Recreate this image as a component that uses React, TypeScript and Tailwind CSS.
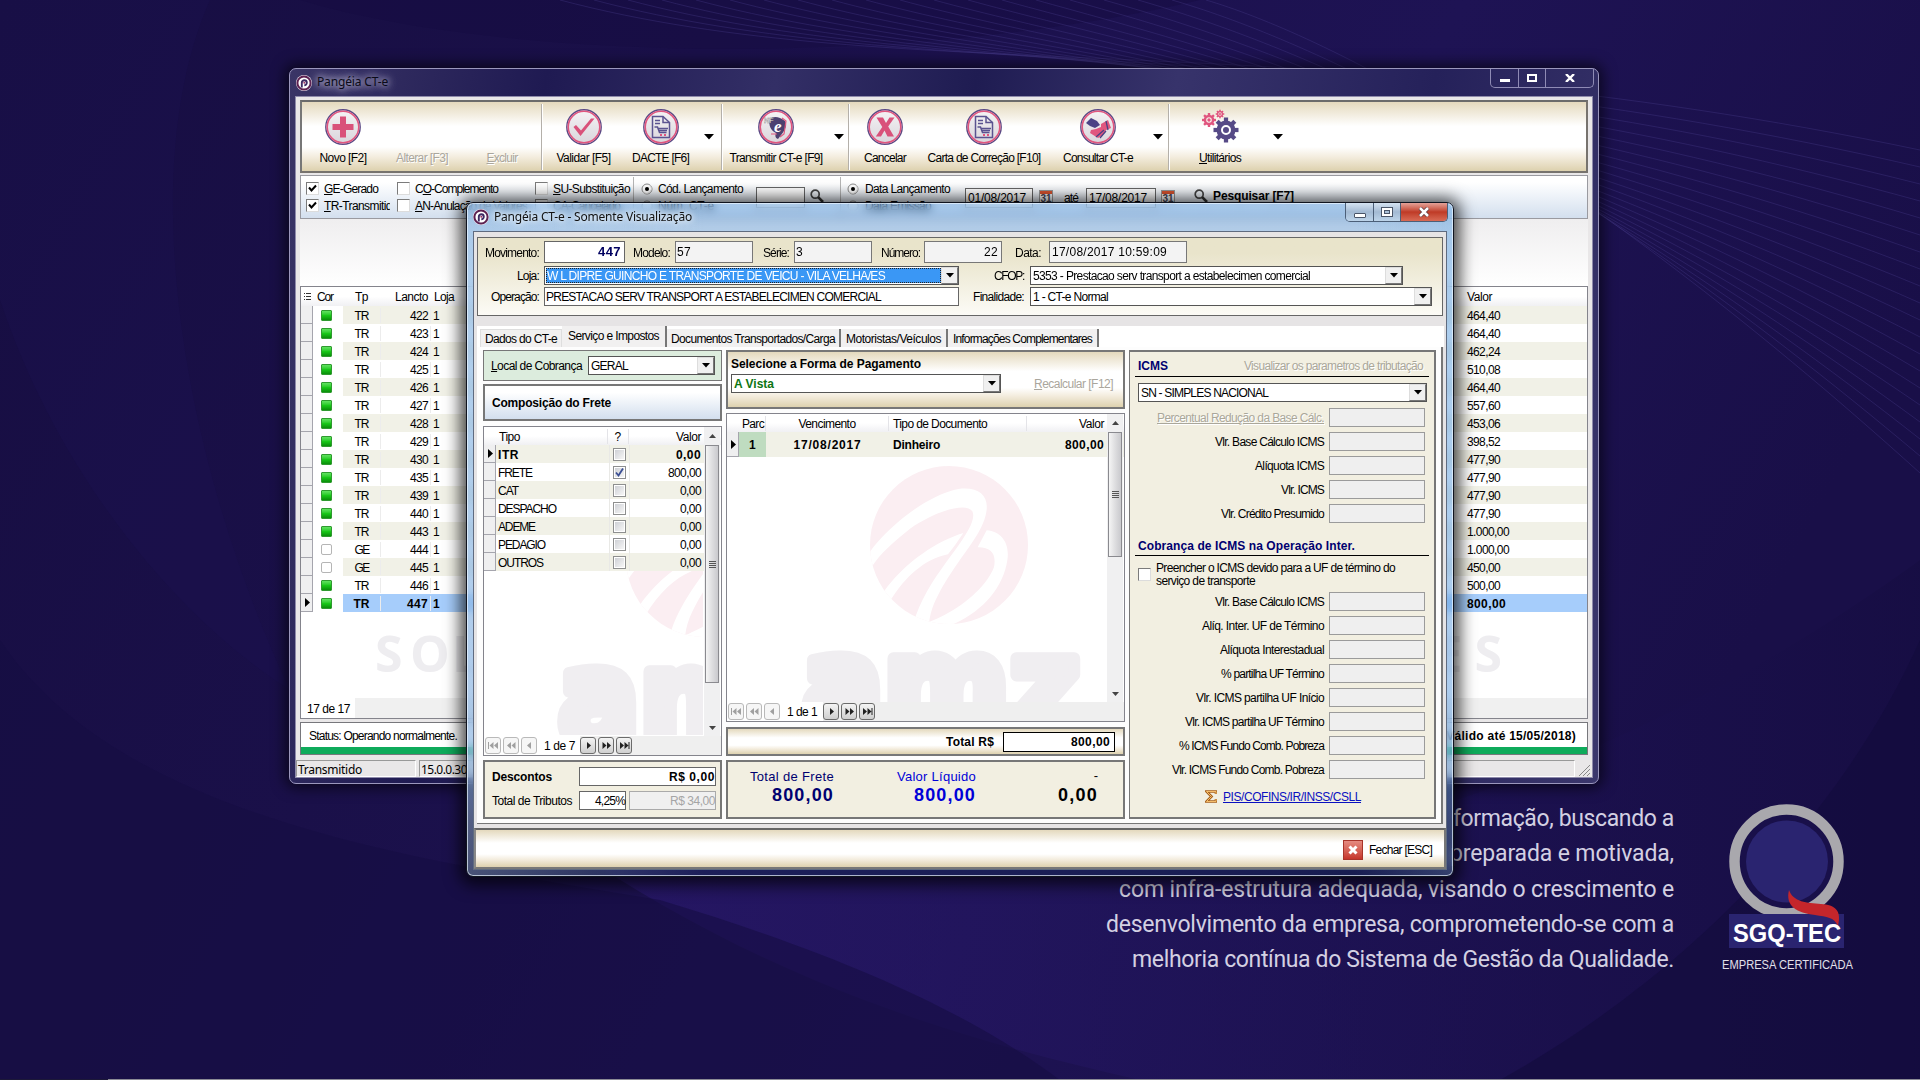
import { useLayoutEffect, useRef, useState, type ReactNode } from "react";

function F({ w, c = "", children }: { w: number; c?: string; children: ReactNode }) {
  const ref = useRef<HTMLSpanElement>(null);
  const [sp, setSp] = useState(0);
  useLayoutEffect(() => {
    const el = ref.current;
    if (!el) return;
    const natural = el.getBoundingClientRect().width;
    setSp((w - natural) / Math.max(1, (el.textContent || "").length));
  }, []);
  return (
    <span ref={ref} className={`inline-block shrink-0 translate-y-px whitespace-pre ${c}`} style={{ letterSpacing: `${sp}px` }}>
      {children}
    </span>
  );
}

const BEIGE = "bg-[linear-gradient(180deg,#e4d9bd_0%,#ffffff_35%,#ffffff_65%,#f3ecdd_80%,#ddd1ae_100%)]";

function Desktop() {
  return (
    <svg className="absolute inset-0" width="1920" height="1080" viewBox="0 0 1920 1080">
      <defs>
        <linearGradient id="bg" x1="0" y1="0" x2="1" y2="0.3">
          <stop offset="0" stopColor="#170e42" />
          <stop offset="0.35" stopColor="#1a1049" />
          <stop offset="0.7" stopColor="#1e1354" />
          <stop offset="1" stopColor="#190f48" />
        </linearGradient>
        <linearGradient id="swell" x1="0" y1="0" x2="1" y2="0">
          <stop offset="0" stopColor="#2a196e" stopOpacity="0.7" />
          <stop offset="0.5" stopColor="#20145a" stopOpacity="0.6" />
          <stop offset="1" stopColor="#160d42" stopOpacity="0.7" />
        </linearGradient>
      </defs>
      <rect width="1920" height="1080" fill="url(#bg)" />
      <path d="M0 0H210C130 180 190 480 290 690C180 620 60 480 0 300Z" fill="#20135a" opacity="0.2" />
      <path d="M560 840C760 980 960 1040 1140 1080H1920V560C1700 720 1400 860 1100 860Z" fill="url(#swell)" />
      <path d="M0 640C120 820 420 860 660 900C860 960 980 1020 1060 1080H0Z" fill="#160d42" opacity="0.6" />
      <path d="M1500 1080C1680 980 1840 820 1920 640V1080Z" fill="#130b3c" opacity="0.6" />
      <path d="M300 0C500 60 900 70 1200 0Z" fill="#150c42" opacity="0.5" />
      <g fill="none" stroke="#4a3d8c" strokeOpacity="0.34" strokeWidth="1">
        {Array.from({ length: 20 }, (_, i) => (
          <path key={i} d={`M${560 + i * 34} 0C${900 + i * 22} ${90 - i * 3} ${1300 + i * 14} ${20 + i * 7} 1920 ${150 + i * 17}`} />
        ))}
      </g>
      <rect y="1079" width="1920" height="1" fill="#8b8b95" />
      <rect y="1079" width="108" height="1" fill="#1c1838" />
    </svg>
  );
}

function AppLogo({ size }: { size: number }) {
  return (
    <svg width={size} height={size} viewBox="0 0 16 16" className="shrink-0">
      <circle cx="8" cy="8" r="8" fill="#efe6ef" />
      <circle cx="8" cy="8" r="6.6" fill="#fff" stroke="#5c2050" strokeWidth="2" />
      <path d="M5.8 12.5V7.8A2.5 2.5 0 1 1 8.300 10.300" fill="none" stroke="#3d2a63" strokeWidth="1.900" />
      <circle cx="8.3" cy="7.8" r="1" fill="#a03565" />
    </svg>
  );
}

function Sphere() {
  return (
    <svg width="158" height="158" viewBox="450 197 474 474">
      <defs>
        <clipPath id="ball"><circle cx="687" cy="434" r="237" /></clipPath>
      </defs>
      <g clipPath="url(#ball)">
        <rect x="450" y="197" width="474" height="474" fill="#fbeef2" />
        <g fill="#fff">
          <path d="M440 468C500 380 620 285 715 266C775 258 808 285 799 335C788 400 730 455 670 555C645 600 630 630 626 680L580 672C600 590 660 510 705 450C745 395 768 355 757 333C740 305 650 330 570 385C520 425 480 460 455 500Z" />
          <path d="M488 580C540 500 640 425 730 398C712 425 698 445 684 462C620 475 560 520 508 606Z" />
          <path d="M800 390C845 393 870 430 862 480C850 560 790 635 690 676L625 666C720 630 800 560 822 500C830 460 812 440 773 441Z" />
        </g>
      </g>
    </svg>
  );
}

function Watermark() {
  return (
    <>
      <div className="absolute left-[73px] top-0"><Sphere /></div>
      <svg className="absolute left-0 top-[150px]" width="292" height="160">
        <text x="5" y="114" textLength="278" lengthAdjust="spacingAndGlyphs" fontFamily="DejaVu Sans" fontWeight="bold" fontSize="130" fill="#f0eef1" stroke="#f0eef1" strokeWidth="13" strokeLinejoin="round">amz</text>
      </svg>
    </>
  );
}

/* ---- toolbar ---- */
function Ring({ children }: { children: ReactNode }) {
  return (
    <svg width="36" height="36" viewBox="0 0 36 36">
      <defs>
        <linearGradient id="rg" x1="0" y1="0" x2="0" y2="1"><stop offset="0" stopColor="#f4f2f4" /><stop offset="1" stopColor="#dad6dc" /></linearGradient>
      </defs>
      <circle cx="18" cy="18" r="17.2" fill="#fff" stroke="#5b4a85" strokeWidth="1.4" />
      <circle cx="18" cy="18" r="15.8" fill="url(#rg)" stroke="#e0567f" strokeWidth="1.6" />
      {children}
    </svg>
  );
}
const DocIcon = () => (
  <Ring>
    <g fill="none" stroke="#5b5390" strokeWidth="1.5">
      <path d="M9.5 7.5H20L26.5 13.5V28.5H9.5Z" /><path d="M20 7.5V13.5H26.5M12 11.5H17M12 14.5H17" />
      <path d="M11.5 18H14.5L16.5 23.5H23.5M15.5 19.5H25M16 21.5H24" />
    </g>
    <rect x="17" y="25" width="2" height="2" fill="#e0567f" /><rect x="21" y="25" width="2" height="2" fill="#e0567f" />
  </Ring>
);
function Gear({ x, y, r, color }: { x: number; y: number; r: number; color: string }) {
  return (
    <g transform={`translate(${x} ${y})`} fill={color}>
      {[0, 45, 90, 135, 180, 225, 270, 315].map((a) => (
        <rect key={a} x={-r * 0.17} y={-r} width={r * 0.34} height={r * 0.4} transform={`rotate(${a})`} />
      ))}
      <circle r={r * 0.58} fill="none" stroke={color} strokeWidth={r * 0.36} />
      <circle r={r * 0.24} />
    </g>
  );
}
function Tool({ icon, w, cell, dis, children }: { icon?: ReactNode; w: number; cell: string; dis?: boolean; children: ReactNode }) {
  return (
    <div className={`flex h-[70px] shrink-0 flex-col items-center pt-[7px] ${cell}`}>
      <div className="flex h-9 items-center">{icon}</div>
      <div className="mt-[5px]">
        <F w={w} c={dis ? "text-[#aaa69c] [text-shadow:1px_1px_0_#fff]" : ""}>{children}</F>
      </div>
    </div>
  );
}
const Drop = ({ c }: { c: string }) => (
  <div className={`flex h-[70px] shrink-0 justify-center pt-[32px] ${c}`}>
    <svg width="10" height="6"><path d="M0 0H10L5 5.5Z" fill="#000" /></svg>
  </div>
);
const Sep = () => <div className="mt-[2px] h-[66px] w-[2px] shrink-0 border-l border-[#b4b0aa] bg-white" />;

function Check({ on }: { on?: boolean }) {
  return (
    <span className="flex h-[13px] w-[13px] shrink-0 items-center justify-center border border-[#7b7b7b] border-b-[#dcdcdc] border-r-[#dcdcdc] bg-white">
      {on && <svg width="9" height="9" viewBox="0 0 9 9"><path d="M1 3.5L3.5 6.5L8 1.5" fill="none" stroke="#000" strokeWidth="2" /></svg>}
    </span>
  );
}
function Radio({ on }: { on?: boolean }) {
  return (
    <svg width="12" height="12" className="shrink-0">
      <circle cx="6" cy="6" r="5" fill="#fff" stroke="#8a8a8a" /><path d="M2.5 9.5A5 5 0 0 0 9.5 2.5" stroke="#ddd" fill="none" />
      {on && <circle cx="6" cy="6" r="2" fill="#000" />}
    </svg>
  );
}
const Mag = () => (
  <svg width="14" height="14" viewBox="0 0 14 14" className="shrink-0"><circle cx="5.2" cy="5.2" r="4" fill="#eef3f8" stroke="#444" strokeWidth="1.7" /><path d="M8.2 8.2L13 13" stroke="#333" strokeWidth="2.6" /></svg>
);
const Cal = () => (
  <div className="h-[14px] w-[14px] shrink-0 border border-[#9a9a9a] bg-white text-center text-[10px] font-bold leading-[10px] text-[#445]"><div className="h-[3px] bg-[#d9532f]" />31</div>
);

const rowsMain: [string, string, string, boolean][] = [
  ["TR", "422", "464,40", true], ["TR", "423", "464,40", true], ["TR", "424", "462,24", true], ["TR", "425", "510,08", true],
  ["TR", "426", "464,40", true], ["TR", "427", "557,60", true], ["TR", "428", "453,06", true], ["TR", "429", "398,52", true],
  ["TR", "430", "477,90", true], ["TR", "435", "477,90", true], ["TR", "439", "477,90", true], ["TR", "440", "477,90", true],
  ["TR", "443", "1.000,00", true], ["GE", "444", "1.000,00", false], ["GE", "445", "450,00", false], ["TR", "446", "500,00", true],
  ["TR", "447", "800,00", true],
];

const Ptr = () => <svg width="5" height="9"><path d="M0 0L5 4.5L0 9Z" fill="#000" /></svg>;

function MainWindow() {
  return (
    <div className="absolute left-[289px] top-[68px] flex h-[716px] w-[1310px] flex-col rounded-[7px] border border-[#9b97bd] bg-[linear-gradient(100deg,#3a3566_0%,#1f1a52_18%,#332f66_34%,#1f1c52_48%,#37336b_62%,#25215a_80%,#3b376c_100%)] px-[5px] pb-[5px] shadow-[0_0_14px_4px_rgba(0,0,0,0.6)]">
      <div className="flex h-[27px] shrink-0 items-center">
        <div className="ml-[1px]"><AppLogo size={16} /></div>
        <div className="mb-[4px] ml-[5px] font-['Noto_Sans'] text-[12px] text-[#0a0a18] [text-shadow:0_0_6px_#b9b6cf,0_0_8px_#b9b6cf,0_0_12px_#a7a3c4]"><F w={71}>Pangéia CT-e</F></div>
        <div className="mb-[8px] ml-auto mr-[-1px] flex h-[19px] rounded-b-[5px] border border-t-0 border-[#8f8bb5] text-white">
          <div className="flex w-[28px] justify-center border-r border-[#8f8bb5] pt-[10px]"><div className="h-[3px] w-[10px] bg-white" /></div>
          <div className="flex w-[27px] justify-center border-r border-[#8f8bb5] pt-[5px]"><div className="h-[8px] w-[10px] border-[2.5px] border-white" /></div>
          <div className="flex w-[47px] justify-center pt-[5px]"><svg width="10" height="8" viewBox="0 0 10 8"><path d="M1 0L9 8M9 0L1 8" stroke="#fff" strokeWidth="2.4" /></svg></div>
        </div>
      </div>
      <div className="flex flex-1 flex-col border border-[#8f8bab] bg-[#e9e7e8] px-[4px] pt-[3px]">
        <div className={`flex h-[73px] shrink-0 border-2 border-[#77736e] border-t-[#6b6b6b] border-l-[#777] ${BEIGE}`}>
          <Tool cell="ml-[3px] w-[76px]" w={47} icon={<Ring><path d="M15 7.5h6v7.500h7.500v6h-7.500v7.500h-6v-7.500h-7.500v-6h7.500z" fill="#d9517a" /></Ring>}>Novo [F2]</Tool>
          <Tool cell="w-[82px]" w={52} dis>Alterar [F3]</Tool>
          <Tool cell="w-[78px]" w={31} dis><u>E</u>xcluir</Tool>
          <Sep />
          <Tool cell="w-[81px]" w={54} icon={<Ring><path d="M7.500 18L14.500 27L28.500 9.500L25 9.500L15 21.500L10 16Z" fill="#d9517a" /></Ring>}>Validar [F5]</Tool>
          <Tool cell="w-[73px]" w={57} icon={<DocIcon />}>DACTE [F6]</Tool>
          <Drop c="w-[24px]" />
          <Sep />
          <Tool cell="w-[106px]" w={93} icon={<Ring><path d="M12 10C15 7 21 7 27 12C31 17 24 25 20 30C17 29 17 26 18 24C13 22 10 16 12 10Z" fill="#4c4170" /><path d="M24 9L28 12L26 25L22 28M13 25H19" fill="none" stroke="#e0567f" strokeWidth="1.200" /><text x="16" y="23" fontFamily="Liberation Serif" fontStyle="italic" fontWeight="bold" fontSize="17" fill="#fff">e</text><text x="6" y="14" fontFamily="Liberation Sans" fontWeight="bold" fontSize="7" fill="#fff" stroke="#666" strokeWidth=".3">NF</text></Ring>}>Transmitir CT-e [F9]</Tool>
          <Drop c="w-[19px]" />
          <Sep />
          <Tool cell="w-[70px]" w={42} icon={<Ring><path d="M9.500 8.500H16L19 14L22.500 8.500H27.500L21.200 17.500L27 27.500H20.500L17.500 21.500L14 27.500H8.800L15.300 18Z" fill="#d9517a" /></Ring>}>Cancelar</Tool>
          <Tool cell="w-[128px]" w={113} icon={<DocIcon />}>Carta de Correção [F10]</Tool>
          <Tool cell="w-[100px]" w={70} icon={<Ring><path d="M6 14L11 9L17 12L20 16L15 19L10 17Z" fill="#4b4285" /><path d="M21 15L28 11L31 19L26 21L23 26L18 29L10 24L11 21L16 20L21 18Z" fill="#e0567f" /><path d="M16 28l8-7M20 29l6-7M26 12l2 9" stroke="#4b4285" strokeWidth="1.300" /></Ring>}>Consultar CT-e</Tool>
          <Drop c="w-[20px]" />
          <Sep />
          <Tool cell="w-[100px]" w={42} icon={<svg width="40" height="38"><Gear x={26} y={22} r={12.5} color="#564a86" /><Gear x={9} y={12} r={7} color="#e0567f" /><Gear x={20} y={6} r={4.3} color="#e0567f" /></svg>}><u>U</u>tilitários</Tool>
          <Drop c="w-[16px]" />
        </div>
        <div className="mt-[2px] flex h-[44px] shrink-0 border border-[#9a9aa0] bg-gradient-to-b from-white from-15% to-[#d3dfee]">
          <div className="w-[92px] pl-[5px] pt-[4px]">
            <div className="flex h-[17px] items-center gap-[5px]"><Check on /><F w={54}><u>G</u>E-Gerado</F></div>
            <div className="flex h-[17px] w-[84px] items-center gap-[5px] overflow-hidden"><Check on /><F w={74}><u>T</u>R-Transmitido</F></div>
          </div>
          <div className="w-[137px] pl-[4px] pt-[4px]">
            <div className="flex h-[17px] items-center gap-[5px]"><Check /><F w={83}>C<u>O</u>-Complemento</F></div>
            <div className="flex h-[17px] items-center gap-[5px]"><Check /><F w={112}><u>A</u>N-Anulação de Valores</F></div>
          </div>
          <div className="w-[103px] pl-[5px] pt-[4px]">
            <div className="flex h-[17px] items-center gap-[5px]"><Check /><F w={77}><u>S</u>U-Substituição</F></div>
            <div className="flex h-[17px] items-center gap-[5px]"><Check /><F w={67}>CA-Cancelado</F></div>
          </div>
          <div className="mt-[1px] w-px bg-[#b5b5b5]" />
          <div className="w-[122px] pl-[7px] pt-[4px]">
            <div className="flex h-[17px] items-center gap-[5px]"><Radio on /><F w={85}>Cód. Lançamento</F></div>
            <div className="flex h-[17px] items-center gap-[5px]"><Radio /><F w={56}>Núm. CT-e</F></div>
          </div>
          <div className="mt-[11px] h-[21px] w-[49px] border border-[#666] bg-white" />
          <div className="ml-[5px] mt-[13px]"><Mag /></div>
          <div className="ml-[16px] mt-[1px] w-px bg-[#b5b5b5]" />
          <div className="w-[124px] pl-[6px] pt-[4px]">
            <div className="flex h-[17px] items-center gap-[6px]"><Radio on /><F w={85}>Data Lançamento</F></div>
            <div className="flex h-[17px] items-center gap-[6px]"><Radio /><F w={66}>Data Emissão</F></div>
          </div>
          <div className="mt-[12px] h-[20px] w-[68px] border border-[#666] bg-white pl-[2px] leading-[16px]"><F w={58}>01/08/2017</F></div>
          <div className="ml-[6px] mt-[14px]"><Cal /></div>
          <div className="ml-[11px] mt-[14px]"><F w={14}>até</F></div>
          <div className="ml-[8px] mt-[12px] h-[20px] w-[70px] border border-[#666] bg-white pl-[2px] leading-[16px]"><F w={58}>17/08/2017</F></div>
          <div className="ml-[5px] mt-[14px]"><Cal /></div>
          <div className="ml-[19px] mt-[13px]"><Mag /></div>
          <div className="ml-[5px] mt-[12px] font-bold"><F w={81}>Pesquisar [F7]</F></div>
        </div>
        <div className="h-[67px] shrink-0 bg-gradient-to-b from-[#efeeef] to-white" />
        <div className="relative flex h-[433px] shrink-0 flex-col border border-[#84848c] bg-white">
          <div className="absolute left-[74px] top-[331px] font-['Open_Sans'] text-[50px] font-bold leading-[70px] text-[#eeedf0]">
            <span className="inline-block w-[35px]">S</span><span className="inline-block w-[42px]">O</span><span>L</span>
          </div>
          <div className="absolute right-[85px] top-[331px] font-['Open_Sans'] text-[50px] font-bold leading-[70px] text-[#eeedf0]">
            <span className="inline-block w-[40px]">E</span><span>S</span>
          </div>
          <div className="flex h-[19px] shrink-0 items-center bg-gradient-to-b from-white from-50% to-[#f0f0f3]">
            <div className="w-[12px] pl-[3px]"><svg width="7" height="9"><path d="M0 1.5H1M2 1.5H7M0 4.500H1M2 4.500H7M0 7.500H1M2 7.500H7" stroke="#333" /></svg></div>
            <div className="w-[29px] pl-[4px]"><F w={16}>Cor</F></div>
            <div className="w-[39px] text-center"><F w={13}>Tp</F></div>
            <div className="w-[47px] text-right"><F w={33}>Lancto</F></div>
            <div className="pl-[6px]"><F w={20}>Loja</F></div>
            <div className="ml-auto w-[120px]"><F w={25}>Valor</F></div>
          </div>
          {rowsMain.map(([tp, n, v, ok], i) => {
            const last = i === 16;
            return (
              <div key={n} className={`relative flex h-[18px] shrink-0 items-center ${last ? "font-bold" : ""}`}>
                <div className="flex h-[18px] w-[12px] items-center border-b border-r border-[#a5a5ad] bg-[#efeff0] pl-[4px]">{last && <Ptr />}</div>
                <div className="flex h-[18px] w-[30px] items-center bg-white pl-[8px]">
                  {ok ? <div className="h-[11px] w-[11px] rounded-[1px] border border-[#2f9a2f] bg-gradient-to-b from-[#5fe35f] via-[#18c818] to-[#0a8f0a]" /> : <div className="h-[11px] w-[11px] rounded-[2px] border border-[#b5b5b5] bg-white" />}
                </div>
                <div className={`flex h-[18px] flex-1 items-center ${last ? "bg-[#a6cdfb]" : i % 2 ? "bg-white" : "bg-[#f1f1e7]"}`}>
                  <div className="w-[38px] border-r border-[#ececec] text-center"><F w={last ? 16 : 14}>{tp}</F></div>
                  <div className="w-[50px] border-r border-[#ececec] pr-[2px] text-right"><F w={last ? 21 : 18}>{n}</F></div>
                  <div className="pl-[2px]"><F w={6}>1</F></div>
                  <div className="ml-auto w-[120px]"><F w={v.length === 8 ? 42 : last ? 39 : 33}>{v}</F></div>
                </div>
              </div>
            );
          })}
          <div className="mt-auto flex h-[20px] items-center bg-[#f0f0f0]"><div className="flex h-full w-[54px] items-center bg-white pl-[6px]"><F w={43}>17 de 17</F></div></div>
        </div>
        <div className="mt-[3px] flex h-[33px] shrink-0 flex-col border border-[#77777c] bg-white">
          <div className="flex flex-1 items-center justify-between pl-[8px] pr-[11px]"><F w={148}>Status: Operando normalmente.</F><span className="font-bold"><F w={245}>Certificado Digital (Válido até 15/05/2018)</F></span></div>
          <div className="h-[7px] bg-[#0fab5b]" />
        </div>
        <div className="mx-[-4px] mt-[5px] flex flex-1 items-center gap-[3px] font-['Noto_Sans']">
          <div className="flex h-full w-[120px] items-center border border-[#999] border-b-white border-r-white pl-[1px]"><F w={64}>Transmitido</F></div>
          <div className="flex h-full flex-1 items-center border border-[#999] border-b-white border-r-white pl-[1px]"><F w={46}>15.0.0.30</F></div>
          <svg width="13" height="13" className="mr-px mt-[3px]"><path d="M1 12L12 1M5 12L12 5M9 12L12 9" stroke="#888" /></svg>
        </div>
      </div>
    </div>
  );
}

/* ---- dialog pieces ---- */
function ArrowBtn() {
  return (
    <div className="flex h-[17px] w-[17px] shrink-0 items-center justify-center border border-b-[#777] border-l-[#ddd] border-r-[#777] border-t-[#ddd] bg-[#f0f0f0]"><svg width="8" height="5"><path d="M0 0H8L4 4.500Z" fill="#000" /></svg></div>
  );
}
function Sel({ c, t, w, tc = "" }: { c: string; t: string; w: number; tc?: string }) {
  return (
    <div className={`flex h-[19px] shrink-0 items-center border border-[#555] bg-white ${c}`}>
      <div className={`min-w-0 flex-1 pl-[2px] ${tc}`}><F w={w}>{t}</F></div>
      <ArrowBtn />
    </div>
  );
}
function Nav({ label, w }: { label: string; w: number }) {
  const btn = (d: string, off: boolean) => (
    <div className={`flex h-[17px] w-[16px] items-center justify-center rounded-[3px] border ${off ? "border-[#b9b9b9] bg-[#f6f6f6]" : "border-[#6b6b6b] bg-gradient-to-b from-[#f4f4f4] to-[#cfcfcf]"}`}>
      <svg width="11" height="7" viewBox="0 0 11 7"><path d={d} fill={off ? "#a0a0a0" : "#222"} /></svg>
    </div>
  );
  return (
    <div className="relative mt-auto flex h-[19px] shrink-0 items-center bg-[#efefef]">
      <div className="flex h-full items-center gap-[2px] bg-white pl-px">
        {btn("M0 0h1v7h-1zM5.500 0v7L1.500 3.500zM10 0v7L6 3.500z", true)}
        {btn("M5 0v7L1 3.500zM9.500 0v7L5.500 3.500z", true)}
        {btn("M7 0v7L3 3.500z", true)}
        <div className="w-[41px] pl-[5px]"><F w={w}>{label}</F></div>
      </div>
      <div className="flex items-center gap-[2px]">
        {btn("M4 0v7L8 3.500z", false)}
        {btn("M1.500 0v7L5.500 3.500zM6 0v7L10 3.500z", false)}
        {btn("M1 0v7L5 3.500zM5.500 0v7L9.500 3.500zM9.500 0h1v7h-1z", false)}
      </div>
    </div>
  );
}
function Scroll({ thumb }: { thumb: string }) {
  return (
    <div className="absolute bottom-[19px] right-px top-0 flex w-[16px] flex-col items-center bg-[#f0f0f1]">
      <div className="flex h-[18px] items-center"><svg width="7" height="4"><path d="M0 4L3.500 0L7 4Z" fill="#444" /></svg></div>
      <div className={`flex w-[14px] flex-col items-center justify-center gap-[1px] border border-[#8a8a8f] bg-gradient-to-r from-[#f5f5f5] via-[#dedee0] to-[#c9c9cd] ${thumb}`}>
        <div className="h-px w-[7px] bg-[#555]" /><div className="h-px w-[7px] bg-[#555]" /><div className="h-px w-[7px] bg-[#555]" /><div className="h-px w-[7px] bg-[#555]" />
      </div>
      <div className="mt-auto flex h-[16px] items-center"><svg width="7" height="4"><path d="M0 0L3.500 4L7 0Z" fill="#444" /></svg></div>
    </div>
  );
}

const frete: [string, number, string][] = [["ITR", 21, "0,00"], ["FRETE", 34, "800,00"], ["CAT", 20, "0,00"], ["DESPACHO", 58, "0,00"], ["ADEME", 37, "0,00"], ["PEDAGIO", 47, "0,00"], ["OUTROS", 45, "0,00"]];
const icms1: [string, number][] = [["Percentual Redução da Base Cálc.", 167], ["Vlr. Base Cálculo ICMS", 109], ["Alíquota ICMS", 69], ["Vlr. ICMS", 43], ["Vlr. Crédito Presumido", 103]];
const icms2: [string, number][] = [["Vlr. Base Cálculo ICMS", 109], ["Alíq. Inter. UF de Término", 122], ["Alíquota Interestadual", 104], ["% partilha UF Término", 103], ["Vlr. ICMS partilha UF Início", 128], ["Vlr. ICMS partilha UF Término", 139], ["% ICMS Fundo Comb. Pobreza", 145], ["Vlr. ICMS Fundo Comb. Pobreza", 152]];
const tabs: [string, number, string][] = [["Dados do CT-e", 72, "w-[82px]"], ["Serviço e Impostos", 91, "w-[105px]"], ["Documentos Transportados/Carga", 164, "w-[174px]"], ["Motoristas/Veículos", 95, "w-[107px]"], ["Informações Complementares", 139, "w-[151px]"]];

function IcmsRows({ rows, first }: { rows: [string, number][]; first?: boolean }) {
  return (
    <div className="flex flex-col gap-[5px] pr-[9px]">
      {rows.map(([t, w], i) => (
        <div key={t} className="flex h-[19px] items-center justify-end gap-[5px]">
          <F w={w} c={first && i === 0 ? "text-[#aaa79a] underline [text-shadow:1px_1px_0_#fff]" : ""}>{t}</F>
          <div className="h-[19px] w-[96px] border border-[#9b9b9b] bg-[#efefef]" />
        </div>
      ))}
    </div>
  );
}

function Lbl({ w, cell, t }: { w: number; cell: string; t: string }) {
  return <div className={`shrink-0 text-right ${cell}`}><F w={w}>{t}</F></div>;
}

function Dialog() {
  return (
    <div className="absolute left-[466px] top-[202px] flex h-[675px] w-[988px] flex-col rounded-[7px] border border-[#10141f] bg-[linear-gradient(180deg,rgba(30,120,210,0.3)_0%,rgba(30,110,200,0.3)_82%,rgba(20,50,90,0.4)_92%,rgba(20,40,80,0.5)_100%),linear-gradient(90deg,rgba(225,235,245,0.5)_0%,rgba(225,235,245,0)_24%,rgba(190,220,245,0)_90%,rgba(190,220,245,0.35)_100%)] px-[6px] pb-[6px] shadow-[inset_0_0_0_1px_rgba(235,245,255,0.7),0_2px_16px_6px_rgba(0,0,0,0.7)] backdrop-blur-[5px]">
      <div className="flex h-[28px] shrink-0 items-center">
        <div><AppLogo size={16} /></div>
        <div className="mb-[4px] ml-[5px] font-['Noto_Sans'] text-[12px] text-[#111] [text-shadow:0_0_5px_#fff,0_0_9px_#fff]"><F w={198}>Pangéia CT-e - Somente Visualização</F></div>
        <div className="mb-[9px] ml-auto mr-[-1px] flex h-[19px] overflow-hidden rounded-b-[5px] border border-t-0 border-[#4c5f78]">
          <div className="flex w-[28px] justify-center border-r border-[#4c5f78] bg-gradient-to-b from-[#d5e3f2] via-[#a3bad3] to-[#bdd4ea] pt-[10px]"><div className="h-[5px] w-[12px] rounded-[1px] border border-[#4a5568] bg-white" /></div>
          <div className="flex w-[27px] justify-center border-r border-[#4c5f78] bg-gradient-to-b from-[#d5e3f2] via-[#a3bad3] to-[#bdd4ea] pt-[4px]"><div className="flex h-[10px] w-[12px] items-center justify-center border border-[#4a5568] bg-white"><div className="h-[4px] w-[6px] border border-[#4a5568] bg-[#aac0d8]" /></div></div>
          <div className="flex w-[46px] justify-center bg-gradient-to-b from-[#e3a198] via-[#bf3a26] to-[#d86a55] pt-[4px]"><svg width="12" height="10" viewBox="0 0 12 10"><path d="M2 1L10 9M10 1L2 9" stroke="#5a3a40" strokeWidth="4" /><path d="M2 1L10 9M10 1L2 9" stroke="#fff" strokeWidth="2.500" /></svg></div>
        </div>
      </div>
      <div className="flex flex-1 flex-col border border-[#5f6b80] bg-[#e6e4e5]">
        <div className="mx-[3px] mt-[5px] flex h-[79px] shrink-0 flex-col border border-[#666] bg-gradient-to-b from-[#e9e4cb] from-20% to-[#fcfbf6] pt-[3px]">
          <div className="flex h-[22px] items-center">
            <Lbl cell="w-[61px]" w={54} t="Movimento:" />
            <div className="ml-[5px] flex h-[22px] w-[81px] justify-end border border-[#666] bg-white pr-[3px] text-[13px] font-bold leading-[17px] text-[#000060]"><F w={23}>447</F></div>
            <Lbl cell="w-[45px]" w={37} t="Modelo:" />
            <div className="ml-[5px] h-[22px] w-[78px] border border-[#777] bg-[#f3f3f3] pl-[1px] leading-[18px]"><F w={14}>57</F></div>
            <Lbl cell="w-[36px]" w={26} t="Série:" />
            <div className="ml-[5px] h-[22px] w-[78px] border border-[#777] bg-[#f3f3f3] pl-[1px] leading-[18px]"><F w={7}>3</F></div>
            <Lbl cell="w-[48px]" w={39} t="Número:" />
            <div className="ml-[4px] flex h-[22px] w-[78px] justify-end border border-[#777] bg-[#f3f3f3] pr-[3px] leading-[18px]"><F w={14}>22</F></div>
            <Lbl cell="w-[39px]" w={26} t="Data:" />
            <div className="ml-[8px] h-[22px] w-[138px] border border-[#777] bg-[#f3f3f3] pl-[2px] leading-[18px]"><F w={115}>17/08/2017 10:59:09</F></div>
          </div>
          <div className="mt-[3px] flex h-[19px] items-center">
            <Lbl cell="w-[61px]" w={22} t="Loja:" />
            <div className="ml-[5px] flex h-[19px] w-[415px] items-center border border-[#555] bg-white pl-px">
              <div className="flex h-[15px] flex-1 items-center border border-dotted border-[#222] bg-[#3a97f5] text-white"><F w={338}>W L DIPRE GUINCHO E TRANSPORTE DE VEICU - VILA VELHA/ES</F></div>
              <ArrowBtn />
            </div>
            <Lbl cell="w-[65px]" w={30} t="CFOP:" />
            <Sel c="ml-[6px] w-[373px]" t="5353 - Prestacao serv transport a estabelecimen comercial" w={277} />
          </div>
          <div className="mt-[2px] flex h-[19px] items-center">
            <Lbl cell="w-[61px]" w={48} t="Operação:" />
            <div className="ml-[5px] flex h-[19px] w-[415px] items-center border border-[#666] bg-white pl-[1px]"><F w={335}>PRESTACAO SERV TRANSPORT A ESTABELECIMEN COMERCIAL</F></div>
            <Lbl cell="w-[65px]" w={51} t="Finalidade:" />
            <Sel c="ml-[6px] w-[402px]" t="1 - CT-e Normal" w={75} />
          </div>
        </div>
        <div className="ml-[3px] mr-[2px] mt-[10px] flex h-[21px] shrink-0 items-end bg-white pl-[3px]">
          {tabs.map(([t, w, c], i) => (
            <div key={t} className={`flex items-center justify-center bg-[#f1f0f0] ${c} ${i === 1 ? "h-[21px] border-r-2 border-[#777] pb-[3px]" : i === 0 ? "h-[18px] border border-b-0 border-[#dedede]" : "h-[18px] border-r-2 border-[#777]"}`}><F w={w}>{t}</F></div>
          ))}
        </div>
        <div className="ml-[3px] mr-[3px] flex h-[477px] shrink-0 gap-[4px] border-b border-r-2 border-[#777] bg-[#fdfdfd] pl-[6px] pt-[3px]">
          {/* left column */}
          <div className="flex w-[239px] shrink-0 flex-col">
            <div className="flex h-[31px] shrink-0 items-center border border-[#777] bg-[#dcecdd] pl-[7px]">
              <F w={91}><u>L</u>ocal de Cobrança</F>
              <Sel c="ml-[6px] w-[127px]" t="GERAL" w={37} />
            </div>
            <div className="mt-[3px] flex h-[37px] shrink-0 items-center border-2 border-[#777] bg-gradient-to-b from-white from-20% to-[#d3dfee] pl-[7px] font-bold"><F w={119}>Composição do Frete</F></div>
            <div className="relative mt-[5px] flex h-[330px] shrink-0 flex-col overflow-hidden border border-[#84848c] bg-white">
              <div className="absolute left-[69px] top-[52px] h-[256px] w-[150px] overflow-hidden"><Watermark /></div>
              <div className="relative flex h-[18px] shrink-0 items-center bg-gradient-to-b from-white from-50% to-[#f0f0f3] pr-[16px]">
                <div className="w-[124px] border-r border-[#e4e4e8] pl-[15px]"><F w={21}>Tipo</F></div>
                <div className="w-[21px] border-r border-[#e4e4e8] text-center"><F w={7}>?</F></div>
                <div className="flex-1 pr-[4px] text-right"><F w={25}>Valor</F></div>
              </div>
              {frete.map(([t, w, v], i) => (
                <div key={t} className={`relative flex h-[18px] shrink-0 items-center pr-[17px] ${i === 0 ? "font-bold" : ""}`}>
                  <div className="flex h-[18px] w-[12px] shrink-0 items-center border-b border-r border-[#a5a5ad] bg-[#efeff0] pl-[4px]">{i === 0 && <Ptr />}</div>
                  <div className={`flex h-[18px] flex-1 items-center ${i % 2 ? "bg-white" : "bg-[#f1f1e7]"}`}>
                    <div className="w-[113px] pl-[2px]"><F w={w}>{t}</F></div>
                    <div className="flex h-full w-[21px] items-center justify-center border-x border-[#e9e9e6]">
                      <div className="flex h-[13px] w-[13px] items-center justify-center border border-[#8e8f8f] bg-white"><div className="flex h-[9px] w-[9px] items-center justify-center bg-gradient-to-br from-[#cfd1d6] to-[#f6f6f6]">{i === 1 && <svg width="9" height="9" viewBox="0 0 9 9"><path d="M1 4.500L3.500 7.500L8 0.500" fill="none" stroke="#3b4f94" strokeWidth="1.800" /></svg>}</div></div>
                    </div>
                    <div className="flex-1 pr-[3px] text-right"><F w={v.length > 4 ? 33 : i === 0 ? 25 : 21}>{v}</F></div>
                  </div>
                </div>
              ))}
              <Scroll thumb="h-[238px]" />
              <Nav label="1 de 7" w={31} />
            </div>
            <div className="mt-[4px] flex h-[59px] shrink-0 flex-col border-2 border-[#777] bg-[#f2efe1] pt-[5px]">
              <div className="flex h-[19px] items-center"><div className="w-[87px] pl-[7px] font-bold"><F w={60}>Descontos</F></div><div className="ml-[7px] flex h-[19px] w-[137px] items-center justify-end border border-[#666] bg-white font-bold"><F w={46}>R$ 0,00</F></div></div>
              <div className="mt-[5px] flex h-[19px] items-center"><div className="w-[87px] pl-[7px]"><F w={80}>Total de Tributos</F></div><div className="ml-[7px] flex h-[19px] w-[47px] items-center justify-end border border-[#666] bg-white"><F w={30}>4,25%</F></div><div className="ml-[3px] flex h-[19px] w-[87px] items-center justify-end border border-[#aaa] bg-[#f0f0f0] text-[#a5a5a5]"><F w={45}>R$ 34,00</F></div></div>
            </div>
          </div>
          {/* middle column */}
          <div className="flex w-[399px] shrink-0 flex-col">
            <div className={`h-[59px] shrink-0 border-2 border-[#777] pl-[3px] pt-[4px] ${BEIGE}`}>
              <div className="font-bold leading-[15px]"><F w={190}>Selecione a Forma de Pagamento</F></div>
              <div className="mt-[2px] flex items-center"><Sel c="mt-px w-[270px]" t="A Vista" w={40} tc="font-bold text-[#0d7512]" /><div className="ml-auto pr-[10px] text-[#aaa69c]"><F w={79}><u>R</u>ecalcular [F12]</F></div></div>
            </div>
            <div className="relative mt-[4px] flex h-[309px] shrink-0 flex-col overflow-hidden border border-[#84848c] bg-white">
              <div className="absolute left-[70px] top-[52px] h-[236px] w-[300px] overflow-hidden"><Watermark /></div>
              <div className="relative flex h-[18px] shrink-0 items-center bg-gradient-to-b from-white from-50% to-[#f0f0f3]">
                <div className="w-[39px] border-r border-[#e4e4e8] pl-[15px]"><F w={22}>Parc</F></div>
                <div className="w-[123px] border-r border-[#e4e4e8] text-center"><F w={57}>Vencimento</F></div>
                <div className="w-[138px] border-r border-[#e4e4e8] pl-[4px]"><F w={94}>Tipo de Documento</F></div>
                <div className="flex-1 pr-[20px] text-right"><F w={25}>Valor</F></div>
              </div>
              <div className="relative flex h-[25px] shrink-0 items-center font-bold">
                <div className="flex h-full w-[12px] items-center border-b border-r border-[#a5a5ad] bg-[#efeff0] pl-[4px]"><Ptr /></div>
                <div className="flex h-full w-[27px] items-center justify-center bg-[#bfdcc0]"><F w={7}>1</F></div>
                <div className="flex h-full flex-1 items-center bg-[#f1f1e7] pr-[20px]">
                  <div className="w-[123px] text-center"><F w={68}>17/08/2017</F></div><div className="pl-[4px]"><F w={47}>Dinheiro</F></div><div className="ml-auto"><F w={39}>800,00</F></div>
                </div>
              </div>
              <Scroll thumb="h-[125px]" />
              <Nav label="1 de 1" w={30} />
            </div>
            <div className={`mt-[5px] flex h-[29px] shrink-0 items-center justify-end border-2 border-[#777] pr-[8px] font-bold ${BEIGE}`}>
              <F w={48}>Total R$</F><div className="ml-[9px] flex h-[20px] w-[112px] items-center justify-end border border-black bg-white pr-[4px] leading-[13px]"><F w={39}>800,00</F></div>
            </div>
            <div className="mt-[4px] flex h-[59px] shrink-0 border-2 border-[#777] bg-[#f2efe1] pt-[5px] text-right text-[13px] leading-[18px]">
              <div className="w-[106px] text-[#000070]"><F w={84}>Total de Frete</F><div className="text-[18px] font-bold leading-[18px]"><F w={62}>800,00</F></div></div>
              <div className="w-[142px] text-[#0000d8]"><F w={79}>Valor Líquido</F><div className="text-[18px] font-bold leading-[18px]"><F w={62}>800,00</F></div></div>
              <div className="w-[122px]">-<div className="text-[18px] font-bold leading-[18px]"><F w={40}>0,00</F></div></div>
            </div>
          </div>
          {/* right column */}
          <div className="flex h-[469px] w-[307px] shrink-0 flex-col border-2 border-l border-[#777] bg-[#f2efe1]">
            <div className="mx-[5px] flex h-[25px] shrink-0 items-center justify-between border-b border-black pl-[3px] pr-[6px] pt-[2px]"><span className="font-bold text-[#000070]"><F w={30}>ICMS</F></span><F w={179} c="text-[#aaa79a] [text-shadow:1px_1px_0_#fff]">Visualizar os parametros de tributação</F></div>
            <Sel c="ml-[8px] mt-[6px] w-[289px]" t="SN - SIMPLES NACIONAL" w={127} />
            <div className="mt-[6px]"><IcmsRows rows={icms1} first /></div>
            <div className="mx-[5px] mt-[12px] flex h-[21px] shrink-0 items-center border-b border-black pl-[3px] font-bold text-[#000070]"><F w={217}>Cobrança de ICMS na Operação Inter.</F></div>
            <div className="flex h-[36px] shrink-0 items-center gap-[5px] pl-[8px] leading-[13px]"><Check /><div><F w={239}>Preencher o ICMS devido para a UF de término do</F><br /><F w={99}>serviço de transporte</F></div></div>
            <IcmsRows rows={icms2} />
            <div className="mt-[10px] flex items-center pl-[75px] text-[#0a10c0]">
              <svg width="12" height="13" viewBox="0 0 12 13"><path d="M11 4V1.500H1.500L6.500 6.500L1.500 11.500H11V9" fill="none" stroke="#a8621c" strokeWidth="2.600" /><path d="M11 4V1.500H1.500L6.500 6.500L1.500 11.500H11V9" fill="none" stroke="#f5bd6a" strokeWidth="1" /></svg>
              <F w={138} c="ml-[6px] underline">PIS/COFINS/IR/INSS/CSLL</F>
            </div>
          </div>
        </div>
        <div className={`mt-auto flex h-[41px] items-center justify-end border-2 border-[#777] border-l-[#888] border-t-[#666] pr-[12px] pt-[2px] ${BEIGE}`}>
          <div className="flex h-[20px] w-[20px] items-center justify-center border border-[#a8342a] bg-gradient-to-b from-[#e58a80] to-[#c5342a]"><svg width="10" height="10"><path d="M1.500 1.500L8.500 8.500M8.500 1.500L1.500 8.500" stroke="#fff" strokeWidth="3" /></svg></div>
          <F w={63} c="ml-[6px]">Fechar [ESC]</F>
        </div>
      </div>
    </div>
  );
}

function Motto() {
  const lines: [string, number][] = [["formação, buscando a", 221], ["preparada e motivada,", 224], ["com infra-estrutura adequada, visando o crescimento e", 555], ["desenvolvimento da empresa, comprometendo-se com a", 568], ["melhoria contínua do Sistema de Gestão da Qualidade.", 542]];
  return (
    <div className="absolute left-[1074px] top-[800px] w-[600px] text-right font-['Roboto'] text-[23px] leading-[35.3px] text-[#d3d0e2]">
      {lines.map(([t, w]) => <div key={t}><F w={w}>{t}</F></div>)}
    </div>
  );
}

function Certificate() {
  return (
    <svg className="absolute left-[1715px] top-[800px]" width="150" height="180">
      <circle cx="71.500" cy="61.500" r="52" fill="#19104a" stroke="#a9a8ad" strokeWidth="10.500" />
      <circle cx="72" cy="61.500" r="41" fill="#2a2470" />
      <rect x="14" y="114" width="115" height="34" fill="#2a2470" />
      <path d="M74 90C78 102 92 103 106 104C120 105 127 110 123 126C119 117 112 117 100 115C82 113 70 106 74 90Z" fill="#c4262b" />
      <text x="18" y="142" fontFamily="Liberation Sans" fontWeight="bold" fontSize="26" fill="#fff" textLength="108" lengthAdjust="spacingAndGlyphs">SGQ-TEC</text>
      <text x="7" y="169" fontFamily="Liberation Sans" fontSize="12" fill="#e2e0ea" textLength="131" lengthAdjust="spacingAndGlyphs">EMPRESA CERTIFICADA</text>
    </svg>
  );
}

export default function App() {
  return (
    <div className="relative h-[1080px] w-[1920px] overflow-hidden bg-[#1a1048] font-['Liberation_Sans',sans-serif] text-[12px] leading-[15px] text-black">
      <Desktop />
      <Motto />
      <Certificate />
      <MainWindow />
      <Dialog />
    </div>
  );
}
